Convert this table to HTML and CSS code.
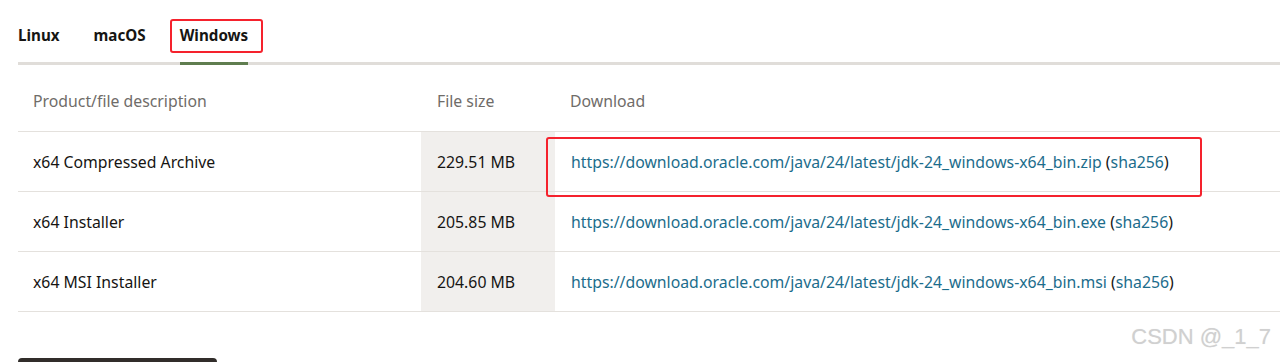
FILE: index.html
```html
<!DOCTYPE html>
<html lang="en">
<head>
    <meta charset="UTF-8">
    <title>JDK 24 Downloads</title>
    <link rel="stylesheet" href="styles.css">
</head>
<body>

    <div class="page">
        <div class="tabs">
            <span class="tab">Linux</span>
            <span class="tab">macOS</span>
            <span class="tab active marked">Windows</span>
        </div>

        <table class="downloads">
            <thead>
                <tr>
                    <th class="col-desc">Product/file description</th>
                    <th class="col-size">File size</th>
                    <th>Download</th>
                </tr>
            </thead>
            <tbody>
                <tr>
                    <td>x64 Compressed Archive</td>
                    <td class="size">229.51 MB</td>
                    <td class="link-cell marked-cell">
                        <a href="#">https://download.oracle.com/java/24/latest/jdk-24_windows-x64_bin.zip</a> (<a href="#">sha256</a>)
                        <span class="red-box"></span>
                    </td>
                </tr>
                <tr>
                    <td>x64 Installer</td>
                    <td class="size">205.85 MB</td>
                    <td class="link-cell">
                        <a href="#">https://download.oracle.com/java/24/latest/jdk-24_windows-x64_bin.exe</a> (<a href="#">sha256</a>)
                    </td>
                </tr>
                <tr>
                    <td>x64 MSI Installer</td>
                    <td class="size">204.60 MB</td>
                    <td class="link-cell">
                        <a href="#">https://download.oracle.com/java/24/latest/jdk-24_windows-x64_bin.msi</a> (<a href="#">sha256</a>)
                    </td>
                </tr>
            </tbody>
        </table>

        <div class="dark-button"></div>
    </div>

    <div class="watermark">CSDN @_1_7</div>

</body>
</html>
```

FILE: styles.css
```css
body {
    margin: 0;
    font-family: 'Noto Sans', 'Open Sans', sans-serif;
    color: #161513;
    background: #fff;
    overflow: hidden;
}
.page {
    padding-left: 18px;
    padding-top: 24px;
}
.tabs {
    display: flex;
    gap: 34px;
    border-bottom: 3px solid #e0ddd9;
}
.tab {
    position: relative;
    font-size: 15.2px;
    font-weight: 700;
    line-height: 22px;
    padding-bottom: 16px;
    margin-bottom: -3px;
    border-bottom: 3px solid transparent;
}
.tab.active {
    border-bottom-color: #5f7d4f;
}
.tab.marked::after {
    content: '';
    position: absolute;
    left: -10px;
    right: -15px;
    top: -5px;
    height: 30px;
    border: 2px solid #f5222d;
    border-radius: 3px;
}
.downloads {
    width: 100%;
    border-collapse: collapse;
    font-size: 15.8px;
}
.downloads th {
    text-align: left;
    font-weight: 400;
    color: #6f6c69;
    height: 60px;
    padding: 6px 15px 0;
    border-bottom: 1px solid #e4e1dd;
}
.downloads td {
    height: 59px;
    padding: 0 15px;
    border-bottom: 1px solid #e4e1dd;
}
.col-desc {
    width: 373px;
}
.col-size {
    width: 103px;
}
.downloads th.col-size,
.downloads td.size {
    padding-left: 16px;
}
.downloads td.size {
    background: #f1efed;
}
.link-cell {
    position: relative;
    padding-left: 16px !important;
    color: #161513;
}
.link-cell a {
    color: #1c6d8c;
    text-decoration: none;
}
.red-box {
    position: absolute;
    left: -9px;
    top: 5px;
    width: 652px;
    height: 56px;
    border: 2px solid #f5222d;
    border-radius: 3px;
}
.dark-button {
    margin-top: 46px;
    width: 199px;
    height: 20px;
    background: #312d2a;
    border-radius: 4px 4px 0 0;
}
.watermark {
    position: absolute;
    right: 9px;
    top: 324px;
    font-family: 'Liberation Sans', Arial, sans-serif;
    font-size: 22px;
    color: #d0d0d0;
    text-shadow: 0 0 1px #e6e6e6;
}
```
